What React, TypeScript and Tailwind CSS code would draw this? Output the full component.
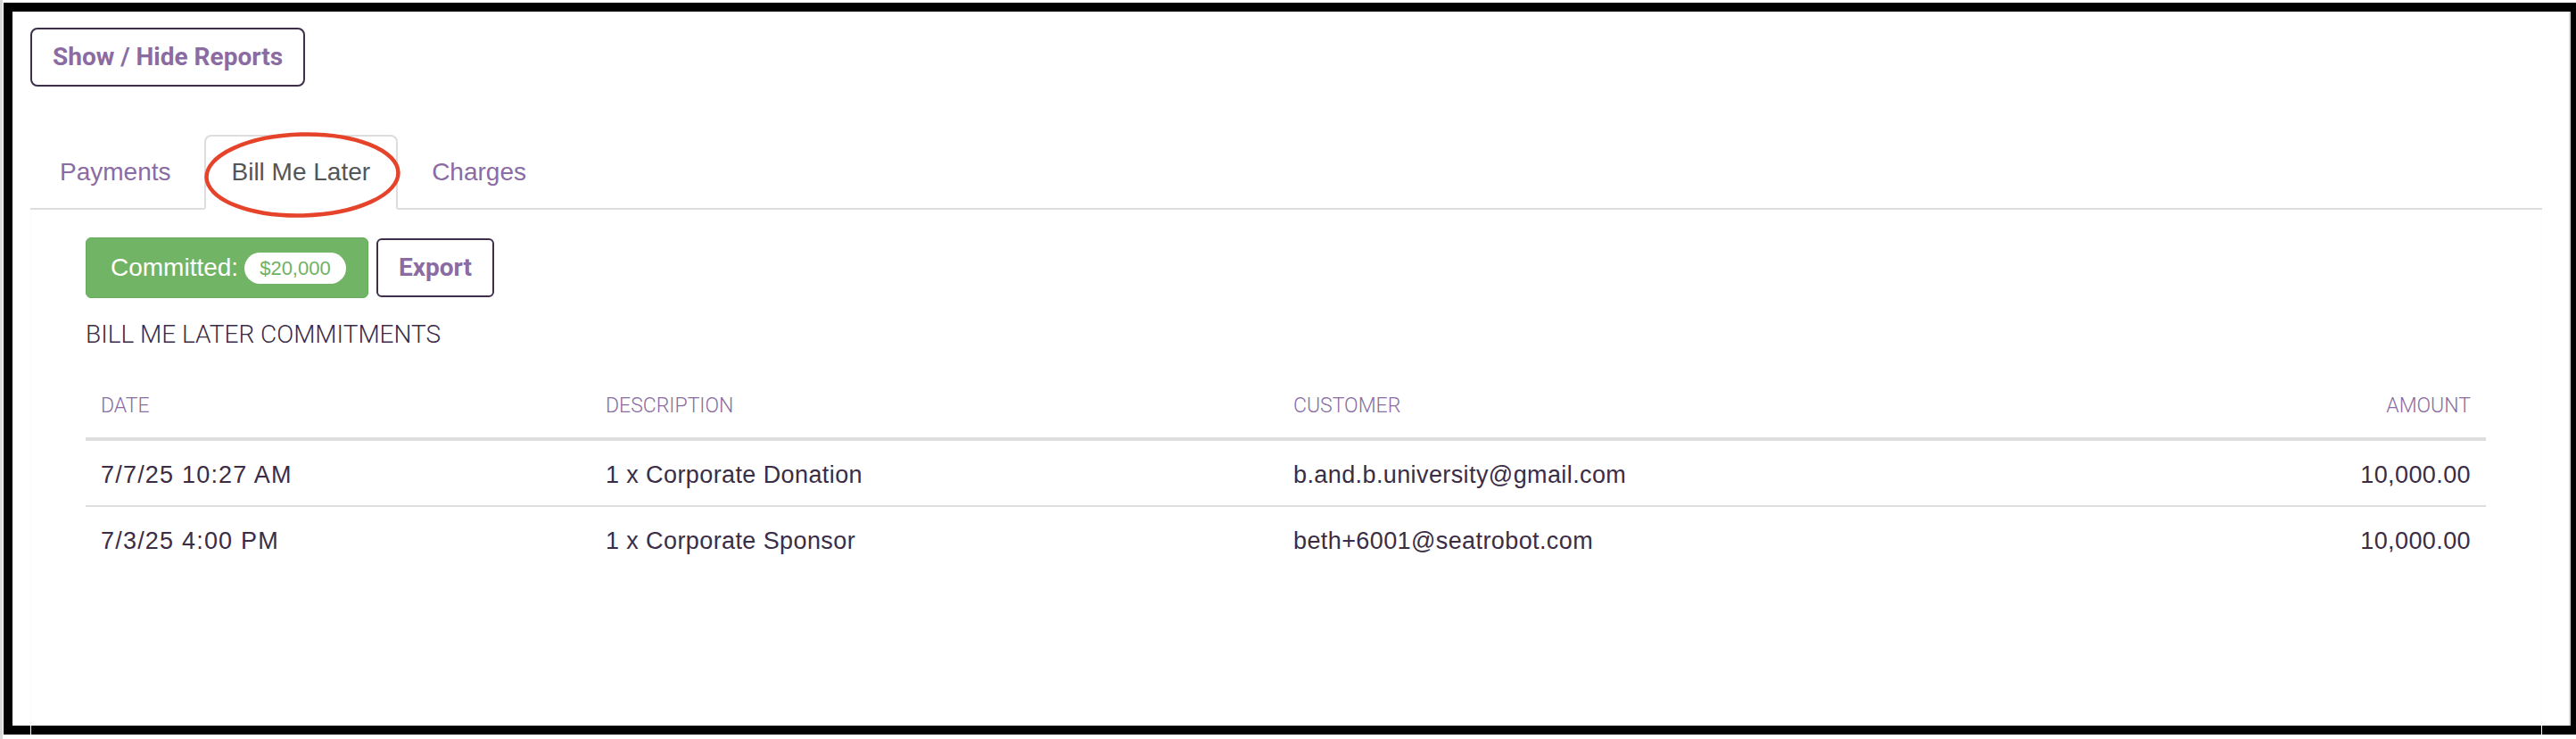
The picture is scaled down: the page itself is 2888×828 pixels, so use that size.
import React from "react";

const rows = [
  { date: "7/7/25 10:27 AM", description: "1 x Corporate Donation", customer: "b.and.b.university@gmail.com", amount: "10,000.00" },
  { date: "7/3/25 4:00 PM", description: "1 x Corporate Sponsor", customer: "beth+6001@seatrobot.com", amount: "10,000.00" },
];

const roboto = "font-['Roboto',sans-serif]";
const helv = "font-['Liberation_Sans',Arial,sans-serif]";

export default function App() {
  return (
    <div className="h-[828px] w-[2888px] overflow-hidden bg-white border-l-[3px] border-[#d9d9d9] pl-[1px] pt-[3px]">
      <div className="h-[820px] w-[2888px] border-[10px] border-black">
        <div className="h-full border-r-2 border-[#dcdcdc] pl-[20px] pr-[30px] pt-[18px]">
          {/* Show / Hide */}
          <button
            className={`${roboto} h-[66px] w-[308px] rounded-[8px] border-2 border-[#3d2e4a] text-[28px] font-bold text-[#8a6ca3]`}
          >
            Show / Hide Reports
          </button>

          {/* Tabs */}
          <div className={`${helv} mt-[54px] flex border-b-2 border-[#dddddd]`}>
            <div className="-mb-[2px] mr-[4px] rounded-t-[8px] border-2 border-transparent px-[31px] py-[20px] text-[28px] leading-[40px] text-[#8a6ca3]">
              Payments
            </div>
            <div className="relative -mb-[2px] mr-[4px] rounded-t-[8px] border-2 border-[#dddddd] border-b-white bg-white px-[29px] py-[20px] text-[28px] leading-[40px] text-[#555555]">
              Bill Me Later
              <svg
                className="pointer-events-none absolute -left-[2px] -top-[5px] overflow-visible"
                width="220"
                height="96"
                viewBox="0 0 220 96"
              >
                <ellipse
                  cx="110"
                  cy="48"
                  rx="107.5"
                  ry="45.5"
                  fill="none"
                  stroke="#e5432a"
                  strokeWidth="4.5"
                  transform="rotate(-1.5 110 48)"
                />
              </svg>
            </div>
            <div className="-mb-[2px] rounded-t-[8px] border-2 border-transparent px-[32px] py-[20px] text-[28px] leading-[40px] text-[#8a6ca3]">
              Charges
            </div>
          </div>

          {/* Tab content */}
          <div className="h-[590px] border-x border-[#fbfbfb] pl-[61px] pr-[62px] pt-[31px]">
            <div className="flex items-center gap-[9px]">
              <div
                className={`${helv} flex h-[68px] w-[317px] items-center rounded-[6px] border border-[#68ab5c] bg-[#72b466] pl-[27px] text-[28px] text-white`}
              >
                Committed:
                <span className="ml-[7px] flex h-[35px] items-center rounded-full bg-white px-[17px] text-[22px] text-[#6fb262]">
                  $20,000
                </span>
              </div>
              <button
                className={`${roboto} h-[66px] w-[132px] rounded-[6px] border-2 border-[#3d2e4a] text-[28px] font-bold text-[#8a6ca3]`}
              >
                Export
              </button>
            </div>

            <div className={`${roboto} mt-[21px] text-[28px] font-light leading-[40px] text-[#3b2c45]`}>
              BILL ME LATER COMMITMENTS
            </div>

            <table className="mt-[28px] w-full table-fixed border-collapse">
              <colgroup>
                <col className="w-[567px]" />
                <col className="w-[771px]" />
                <col className="w-[1000px]" />
                <col />
              </colgroup>
              <thead>
                <tr className={`${roboto} border-b-4 border-[#dddddd] text-[23px] font-light text-[#8a6ca3]`}>
                  <th className="pb-[19px] pl-[17px] pt-[16px] text-left font-light leading-[32px]">DATE</th>
                  <th className="pb-[19px] pl-[16px] pt-[16px] text-left font-light leading-[32px]">DESCRIPTION</th>
                  <th className="pb-[19px] pl-[16px] pt-[16px] text-left font-light leading-[32px]">CUSTOMER</th>
                  <th className="pb-[19px] pr-[17px] pt-[16px] text-right font-light leading-[32px]">AMOUNT</th>
                </tr>
              </thead>
              <tbody className={`${helv} text-[27px] leading-[36px] tracking-[0.4px] text-[#3b2d45]`}>
                {rows.map((row, i) => (
                  <tr key={i} className={i < rows.length - 1 ? "border-b-2 border-[#dddddd]" : ""}>
                    <td className="pb-[16px] pl-[17px] pt-[20px] tracking-[1.2px]">{row.date}</td>
                    <td className="pb-[16px] pl-[16px] pt-[20px]">{row.description}</td>
                    <td className="pb-[16px] pl-[16px] pt-[20px]">{row.customer}</td>
                    <td className="pb-[16px] pr-[17px] pt-[20px] text-right">{row.amount}</td>
                  </tr>
                ))}
              </tbody>
            </table>
          </div>
        </div>
      </div>
    </div>
  );
}
